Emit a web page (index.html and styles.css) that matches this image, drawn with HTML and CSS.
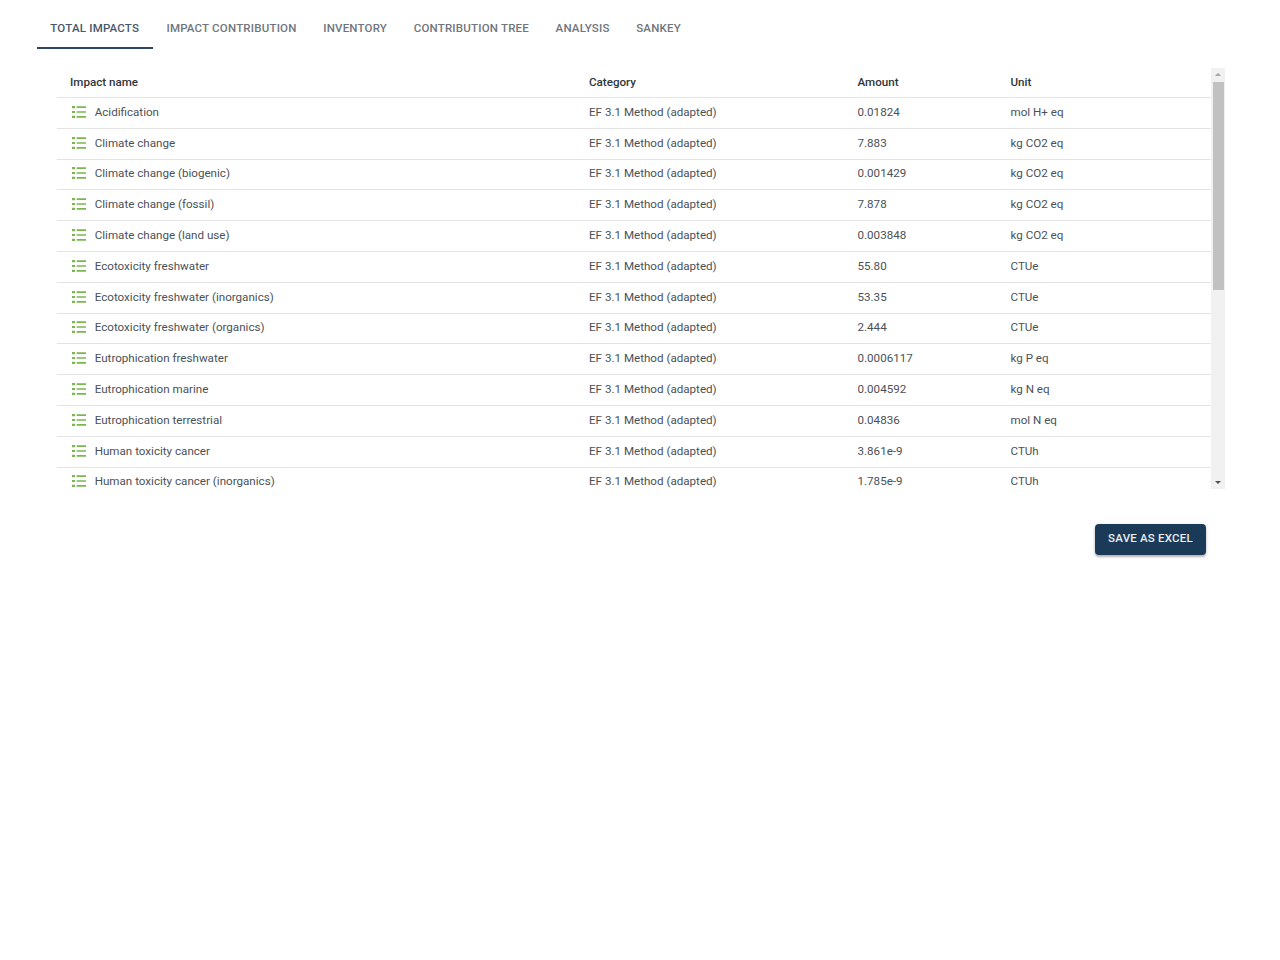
FILE: index.html
```html
<!DOCTYPE html>
<html lang="en">
<head>
<meta charset="utf-8">
<title>Total impacts</title>
<link rel="stylesheet" href="styles.css">
</head>
<body>
<svg class="defs" width="0" height="0" aria-hidden="true">
  <symbol id="list" viewBox="0 0 14 12">
    <path d="M0 0h3v2.2H0zM0 4.9h3v2.2H0zM0 9.8h3v2.2H0z" fill="#7cb653"/>
    <path d="M4.6.3H14v1.7H4.6zM4.6 5.15H14v1.7H4.6zM4.6 10H14v1.7H4.6z" fill="#7cb653"/>
  </symbol>
</svg>
<nav class="tabs">
  <a class="tab active">Total impacts</a>
  <a class="tab">Impact contribution</a>
  <a class="tab">Inventory</a>
  <a class="tab">Contribution tree</a>
  <a class="tab">Analysis</a>
  <a class="tab">Sankey</a>
</nav>
<section class="panel">
  <div class="viewport">
    <div class="row head"><span class="first">Impact name</span><span>Category</span><span>Amount</span><span>Unit</span></div>
    <div class="row"><span class="first"><svg class="icon"><use href="#list"/></svg>Acidification</span><span>EF 3.1 Method (adapted)</span><span>0.01824</span><span>mol H+ eq</span></div>
    <div class="row"><span class="first"><svg class="icon"><use href="#list"/></svg>Climate change</span><span>EF 3.1 Method (adapted)</span><span>7.883</span><span>kg CO2 eq</span></div>
    <div class="row"><span class="first"><svg class="icon"><use href="#list"/></svg>Climate change (biogenic)</span><span>EF 3.1 Method (adapted)</span><span>0.001429</span><span>kg CO2 eq</span></div>
    <div class="row"><span class="first"><svg class="icon"><use href="#list"/></svg>Climate change (fossil)</span><span>EF 3.1 Method (adapted)</span><span>7.878</span><span>kg CO2 eq</span></div>
    <div class="row"><span class="first"><svg class="icon"><use href="#list"/></svg>Climate change (land use)</span><span>EF 3.1 Method (adapted)</span><span>0.003848</span><span>kg CO2 eq</span></div>
    <div class="row"><span class="first"><svg class="icon"><use href="#list"/></svg>Ecotoxicity freshwater</span><span>EF 3.1 Method (adapted)</span><span>55.80</span><span>CTUe</span></div>
    <div class="row"><span class="first"><svg class="icon"><use href="#list"/></svg>Ecotoxicity freshwater (inorganics)</span><span>EF 3.1 Method (adapted)</span><span>53.35</span><span>CTUe</span></div>
    <div class="row"><span class="first"><svg class="icon"><use href="#list"/></svg>Ecotoxicity freshwater (organics)</span><span>EF 3.1 Method (adapted)</span><span>2.444</span><span>CTUe</span></div>
    <div class="row"><span class="first"><svg class="icon"><use href="#list"/></svg>Eutrophication freshwater</span><span>EF 3.1 Method (adapted)</span><span>0.0006117</span><span>kg P eq</span></div>
    <div class="row"><span class="first"><svg class="icon"><use href="#list"/></svg>Eutrophication marine</span><span>EF 3.1 Method (adapted)</span><span>0.004592</span><span>kg N eq</span></div>
    <div class="row"><span class="first"><svg class="icon"><use href="#list"/></svg>Eutrophication terrestrial</span><span>EF 3.1 Method (adapted)</span><span>0.04836</span><span>mol N eq</span></div>
    <div class="row"><span class="first"><svg class="icon"><use href="#list"/></svg>Human toxicity cancer</span><span>EF 3.1 Method (adapted)</span><span>3.861e-9</span><span>CTUh</span></div>
    <div class="row"><span class="first"><svg class="icon"><use href="#list"/></svg>Human toxicity cancer (inorganics)</span><span>EF 3.1 Method (adapted)</span><span>1.785e-9</span><span>CTUh</span></div>
  </div>
  <div class="scrollbar">
    <div class="arrow up"></div>
    <div class="track"><div class="thumb"></div></div>
    <div class="arrow down"></div>
  </div>
</section>
<div class="actions"><button class="save">Save as Excel</button></div>
</body>
</html>
```
FILE: styles.css
```css
* { box-sizing: border-box; }
html, body { margin: 0; background: #fff; }
body { height: 960px; overflow: hidden; font-family: Roboto, "Liberation Sans", sans-serif; color: #3f4a54; }
.defs { position: absolute; }

.tabs { display: flex; height: 49px; margin-left: 37px; }
.tab {
  display: flex; align-items: center; height: 49px;
  padding: 8px 13.3px 0;
  border-bottom: 2px solid transparent;
  font-size: 11.5px; font-weight: 500; letter-spacing: 0.2px;
  text-transform: uppercase; color: #6f767c;
}
.tab.active { padding-right: 14px; color: #46596b; border-bottom-color: #2c4863; }

.panel { display: flex; width: 1168px; height: 421px; margin: 19px 0 0 57px; }
.viewport { width: 1154px; height: 421px; overflow: hidden; }
.row {
  display: grid; grid-template-columns: 532px 268.5px 153px 1fr;
  align-items: center; height: 30.8px; padding-bottom: 2px;
  border-bottom: 1px solid #e3e3e3;
  font-size: 11.62px; color: #4a5157;
}
.row.head { height: 30px; font-weight: 500; color: #2f363c; }
.first { display: flex; align-items: center; padding-left: 13px; }
.row:not(.head) .first { padding-left: 15px; }
.icon { width: 14px; height: 12px; margin-right: 8.7px; flex: none; }

.scrollbar { display: flex; flex-direction: column; width: 14px; height: 421px; background: #f1f1f1; }
.arrow { flex: none; height: 14px; position: relative; }
.arrow::after {
  content: ""; position: absolute; left: 4px; width: 0; height: 0;
  border-left: 3px solid transparent; border-right: 3px solid transparent;
}
.arrow.up::after { top: 5px; border-bottom: 3px solid #a3a3a3; }
.arrow.down::after { bottom: 5px; border-top: 3px solid #505050; }
.track { flex: 1; padding: 0 1px 0 2px; }
.thumb { height: 208px; background: #c1c1c1; }

.actions { display: flex; justify-content: flex-end; width: 1206px; margin-top: 35px; }
.save {
  width: 111px; height: 31px; padding: 0 0 4px;
  border: 0; border-radius: 4px;
  background: #1b3a57; color: #e9edf1;
  font-family: inherit; font-size: 11.5px; font-weight: 500; letter-spacing: 0.2px;
  text-transform: uppercase;
  box-shadow: 0 2px 2px rgba(0,0,0,.22), 0 1px 4px rgba(0,0,0,.14);
}
```
